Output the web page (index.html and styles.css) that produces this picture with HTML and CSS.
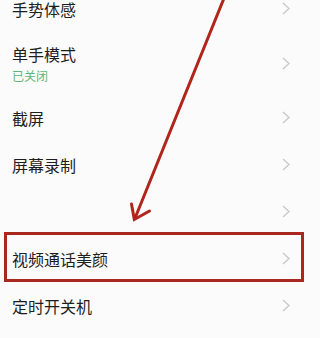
FILE: index.html
```html
<!DOCTYPE html>
<html lang="zh">
<head>
<meta charset="utf-8">
<link rel="stylesheet" href="styles.css">
</head>
<body>
<div class="page">
  <ul class="list">
    <li class="row"><span class="title">手势体感</span><svg class="chev" viewBox="0 0 8 13"><path d="M1 1 L7 6.5 L1 12"/></svg></li>
    <li class="row tall"><div class="texts"><span class="title">单手模式</span><span class="sub">已关闭</span></div><svg class="chev" viewBox="0 0 8 13"><path d="M1 1 L7 6.5 L1 12"/></svg></li>
    <li class="row"><span class="title">截屏</span><svg class="chev" viewBox="0 0 8 13"><path d="M1 1 L7 6.5 L1 12"/></svg></li>
    <li class="row"><span class="title">屏幕录制</span><svg class="chev" viewBox="0 0 8 13"><path d="M1 1 L7 6.5 L1 12"/></svg></li>
    <li class="row"><span class="title"></span><svg class="chev" viewBox="0 0 8 13"><path d="M1 1 L7 6.5 L1 12"/></svg></li>
    <li class="row marked"><span class="title">视频通话美颜</span><svg class="chev" viewBox="0 0 8 13"><path d="M1 1 L7 6.5 L1 12"/></svg><div class="mark"></div></li>
    <li class="row"><span class="title">定时开关机</span><svg class="chev" viewBox="0 0 8 13"><path d="M1 1 L7 6.5 L1 12"/></svg></li>
  </ul>
  <svg class="arrow" viewBox="0 0 309 338" width="309" height="338">
    <line x1="224.5" y1="-3" x2="135.5" y2="217"/>
    <polyline points="131.5,204 134.3,219.5 149.5,211"/>
  </svg>
</div>
</body>
</html>
```

FILE: styles.css
```css
html, body {
  margin: 0;
  padding: 0;
  background: #fbfbfb;
}
.page {
  position: relative;
  width: 309px;
  height: 338px;
  overflow: hidden;
  font-family: "Noto Sans CJK SC", "Noto Sans", sans-serif;
}
.list {
  list-style: none;
  margin: -15px 0 0 0;
  padding: 0;
}
.row {
  position: relative;
  height: 47px;
  display: flex;
  align-items: center;
  justify-content: space-between;
  padding: 0 19px 0 12px;
  box-sizing: border-box;
}
.row.tall {
  height: 62px;
}
.texts {
  display: flex;
  flex-direction: column;
}
.title {
  font-size: 16px;
  line-height: 22px;
  color: #1e1e1e;
}
.sub {
  font-size: 12px;
  line-height: 16px;
  margin-top: 3px;
  color: #5cb879;
}
.tall .texts {
  padding-top: 0;
}
.chev {
  width: 8px;
  height: 13px;
  flex: none;
}
.chev path {
  fill: none;
  stroke: #c9c9c9;
  stroke-width: 1.4;
}
.mark {
  position: absolute;
  top: -3px;
  left: 4px;
  right: 5px;
  bottom: 0;
  border: 3px solid #a8271f;
  pointer-events: none;
}
.arrow {
  position: absolute;
  left: 0;
  top: 0;
  pointer-events: none;
}
.arrow line, .arrow polyline {
  fill: none;
  stroke: #b0251c;
  stroke-width: 3;
  stroke-linecap: round;
  stroke-linejoin: miter;
}
```
